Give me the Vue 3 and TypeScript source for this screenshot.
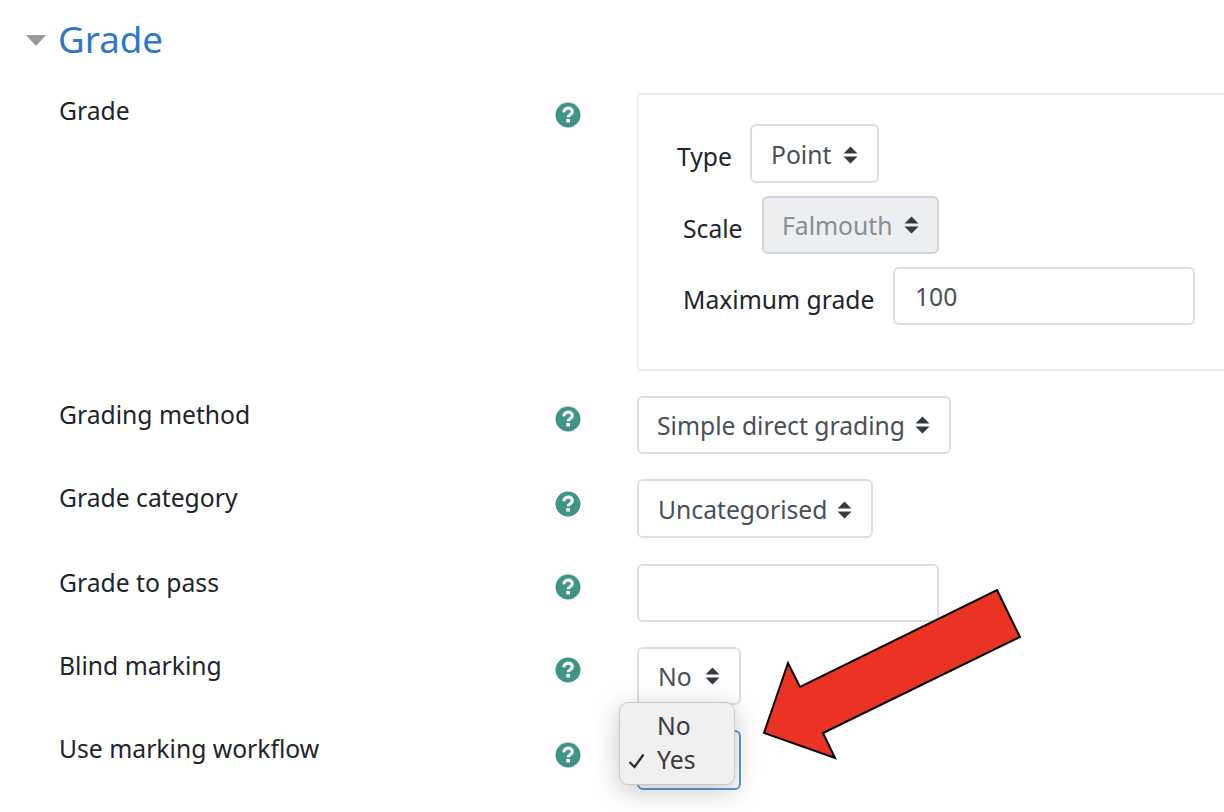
<template>
  <div class="page">
    <div class="section-head">
      <span class="collapse-caret"></span>
      <h3>Grade</h3>
    </div>

    <div class="row grade-row">
      <div class="label first">Grade</div>
      <div class="help top"><HelpIcon /></div>
      <div class="box">
        <div class="box-line">
          <span class="box-label type-label">Type</span>
          <div class="select type-select">Point<CaretIcon /></div>
        </div>
        <div class="box-line indented">
          <span class="box-label scale-label">Scale</span>
          <div class="select scale-select disabled">Falmouth<CaretIcon /></div>
        </div>
        <div class="box-line indented">
          <span class="box-label max-label">Maximum grade</span>
          <div class="input max-input">100</div>
        </div>
      </div>
    </div>

    <div class="row" v-for="row in rows" :key="row.label">
      <div class="label">{{ row.label }}</div>
      <div class="help" :class="{ low: row.cls === 'category-select' }"><HelpIcon /></div>
      <div v-if="row.kind === 'select'" class="select" :class="row.cls">{{ row.value }}<CaretIcon /></div>
      <div v-else class="input pass-input"></div>
    </div>

    <div class="row last-row">
      <div class="label">Use marking workflow</div>
      <div class="help low"><HelpIcon /></div>
      <div class="select focused">
        <div class="popup">
          <div class="popup-item">No</div>
          <div class="popup-item">
            <svg class="tick" width="18" height="16" viewBox="0 0 18 16">
              <path d="M1.5 9 6.5 14 15.5 1.5" fill="none" stroke="#333" stroke-width="2.4" />
            </svg>
            Yes
          </div>
        </div>
      </div>
    </div>

    <svg class="arrow" width="1224" height="812" viewBox="0 0 1224 812">
      <polygon points="997,590 1020,637 823,733 835,758 764,733 788,663 800,687" fill="#ea3323" stroke="#000" stroke-width="2" />
    </svg>
  </div>
</template>

<script setup lang="ts">
import { h } from 'vue';

interface Row {
  label: string;
  kind: 'select' | 'input';
  value?: string;
  cls?: string;
}

const rows: Row[] = [
  { label: 'Grading method', kind: 'select', value: 'Simple direct grading', cls: 'method-select' },
  { label: 'Grade category', kind: 'select', value: 'Uncategorised', cls: 'category-select' },
  { label: 'Grade to pass', kind: 'input' },
  { label: 'Blind marking', kind: 'select', value: 'No', cls: 'blind-select' },
];

const HelpIcon = () =>
  h('svg', { width: 26, height: 26, viewBox: '0 0 26 26' }, [
    h('circle', { cx: 13, cy: 13, r: 12.5, fill: '#3f9486' }),
    h('path', {
      d: 'M8.9 10.2c0-5.2 8.4-5.5 8.4-.5 0 3-4.2 3-4.2 5.6',
      fill: 'none',
      stroke: '#fff',
      'stroke-width': 3.2,
    }),
    h('rect', { x: 11.2, y: 17, width: 3.8, height: 3.6, rx: 0.6, fill: '#fff' }),
  ]);

const CaretIcon = () =>
  h('svg', { class: 'caret', width: 15, height: 18, viewBox: '0 0 15 18' }, [
    h('path', { d: 'M7.5 0.5 14.5 7.5H0.5z M7.5 17.5 0.5 10.5H14.5z', fill: '#343a40' }),
  ]);
</script>

<style scoped>
.page {
  position: relative;
  width: 1224px;
  height: 812px;
  overflow: hidden;
  background: #fff;
  font-family: "Noto Sans", "Open Sans", sans-serif;
  font-size: 24.7px;
  color: #212529;
}

.section-head {
  display: flex;
  align-items: center;
  height: 80px;
  padding-left: 26px;
  box-sizing: border-box;
}

.collapse-caret {
  width: 0;
  height: 0;
  margin-right: 12px;
  border-left: 10.5px solid transparent;
  border-right: 10.5px solid transparent;
  border-top: 11px solid #999;
}

h3 {
  margin: 0 0 2px;
  font-size: 36.7px;
  font-weight: 400;
  line-height: 1;
  color: #3077c9;
}

.row {
  display: flex;
  align-items: flex-start;
  margin-bottom: 25px;
}

.grade-row {
  margin-top: 13px;
}

.label {
  width: 496px;
  flex: none;
  padding-left: 59px;
  line-height: 38px;
}

.label.first {
  line-height: 36px;
}

.help {
  width: 82px;
  flex: none;
  padding-top: 10px;
}

.help.top {
  padding-top: 9px;
}

.help.low {
  padding-top: 12px;
}

.help svg {
  display: block;
}

.select {
  position: relative;
  display: flex;
  align-items: center;
  justify-content: space-between;
  height: 58px;
  box-sizing: border-box;
  padding: 0 9px 0 18px;
  border: 2px solid #dcdfe2;
  border-radius: 6px;
  color: #495057;
  background: #fff;
}

.caret {
  flex: none;
  margin-left: 10px;
}

.input {
  display: flex;
  align-items: center;
  height: 58px;
  box-sizing: border-box;
  padding: 0 20px;
  border: 2px solid #dcdfe2;
  border-radius: 6px;
  color: #495057;
  background: #fff;
}

.box {
  flex: 1;
  height: 278px;
  box-sizing: border-box;
  padding: 29px 0 0 38px;
  border: 2px solid #efefef;
  border-right: none;
}

.box-line {
  display: flex;
  align-items: center;
  margin-bottom: 13px;
}

.indented {
  padding-left: 6px;
}

.box-label {
  flex: none;
  padding-top: 6px;
}

.type-label {
  width: 73px;
}

.scale-label {
  width: 79px;
}

.max-label {
  width: 210px;
}

.type-select {
  width: 129px;
  height: 59px;
  padding: 2px 19px 0 19px;
}

.scale-select {
  width: 177px;
  padding-right: 18px;
}

.disabled {
  background: #eceef0;
  color: #868e96;
  border-color: #ced4da;
}

.max-input {
  width: 302px;
}

.method-select {
  width: 314px;
  padding-right: 19px;
}

.category-select {
  width: 236px;
  height: 59px;
  margin-bottom: 1px;
  padding: 2px 19px 0 19px;
}

.pass-input {
  width: 302px;
}

.blind-select {
  width: 104px;
  padding-left: 19px;
  padding-right: 19px;
}

.focused {
  width: 104px;
  height: 60px;
  border-color: #5b9bd5;
}

.popup {
  position: absolute;
  left: -20px;
  top: -30px;
  width: 116px;
  height: 83px;
  box-sizing: border-box;
  padding-top: 6px;
  background: #f0f0f0;
  border: 1px solid #c8c8c8;
  border-radius: 9px;
  box-shadow: 0 6px 26px rgba(0, 0, 0, 0.22);
  color: #3a3a3a;
}

.popup-item {
  position: relative;
  height: 34px;
  line-height: 34px;
  padding-left: 37px;
}

.tick {
  position: absolute;
  left: 8px;
  top: 10px;
}

.arrow {
  position: absolute;
  left: 0;
  top: 0;
  pointer-events: none;
}
</style>
